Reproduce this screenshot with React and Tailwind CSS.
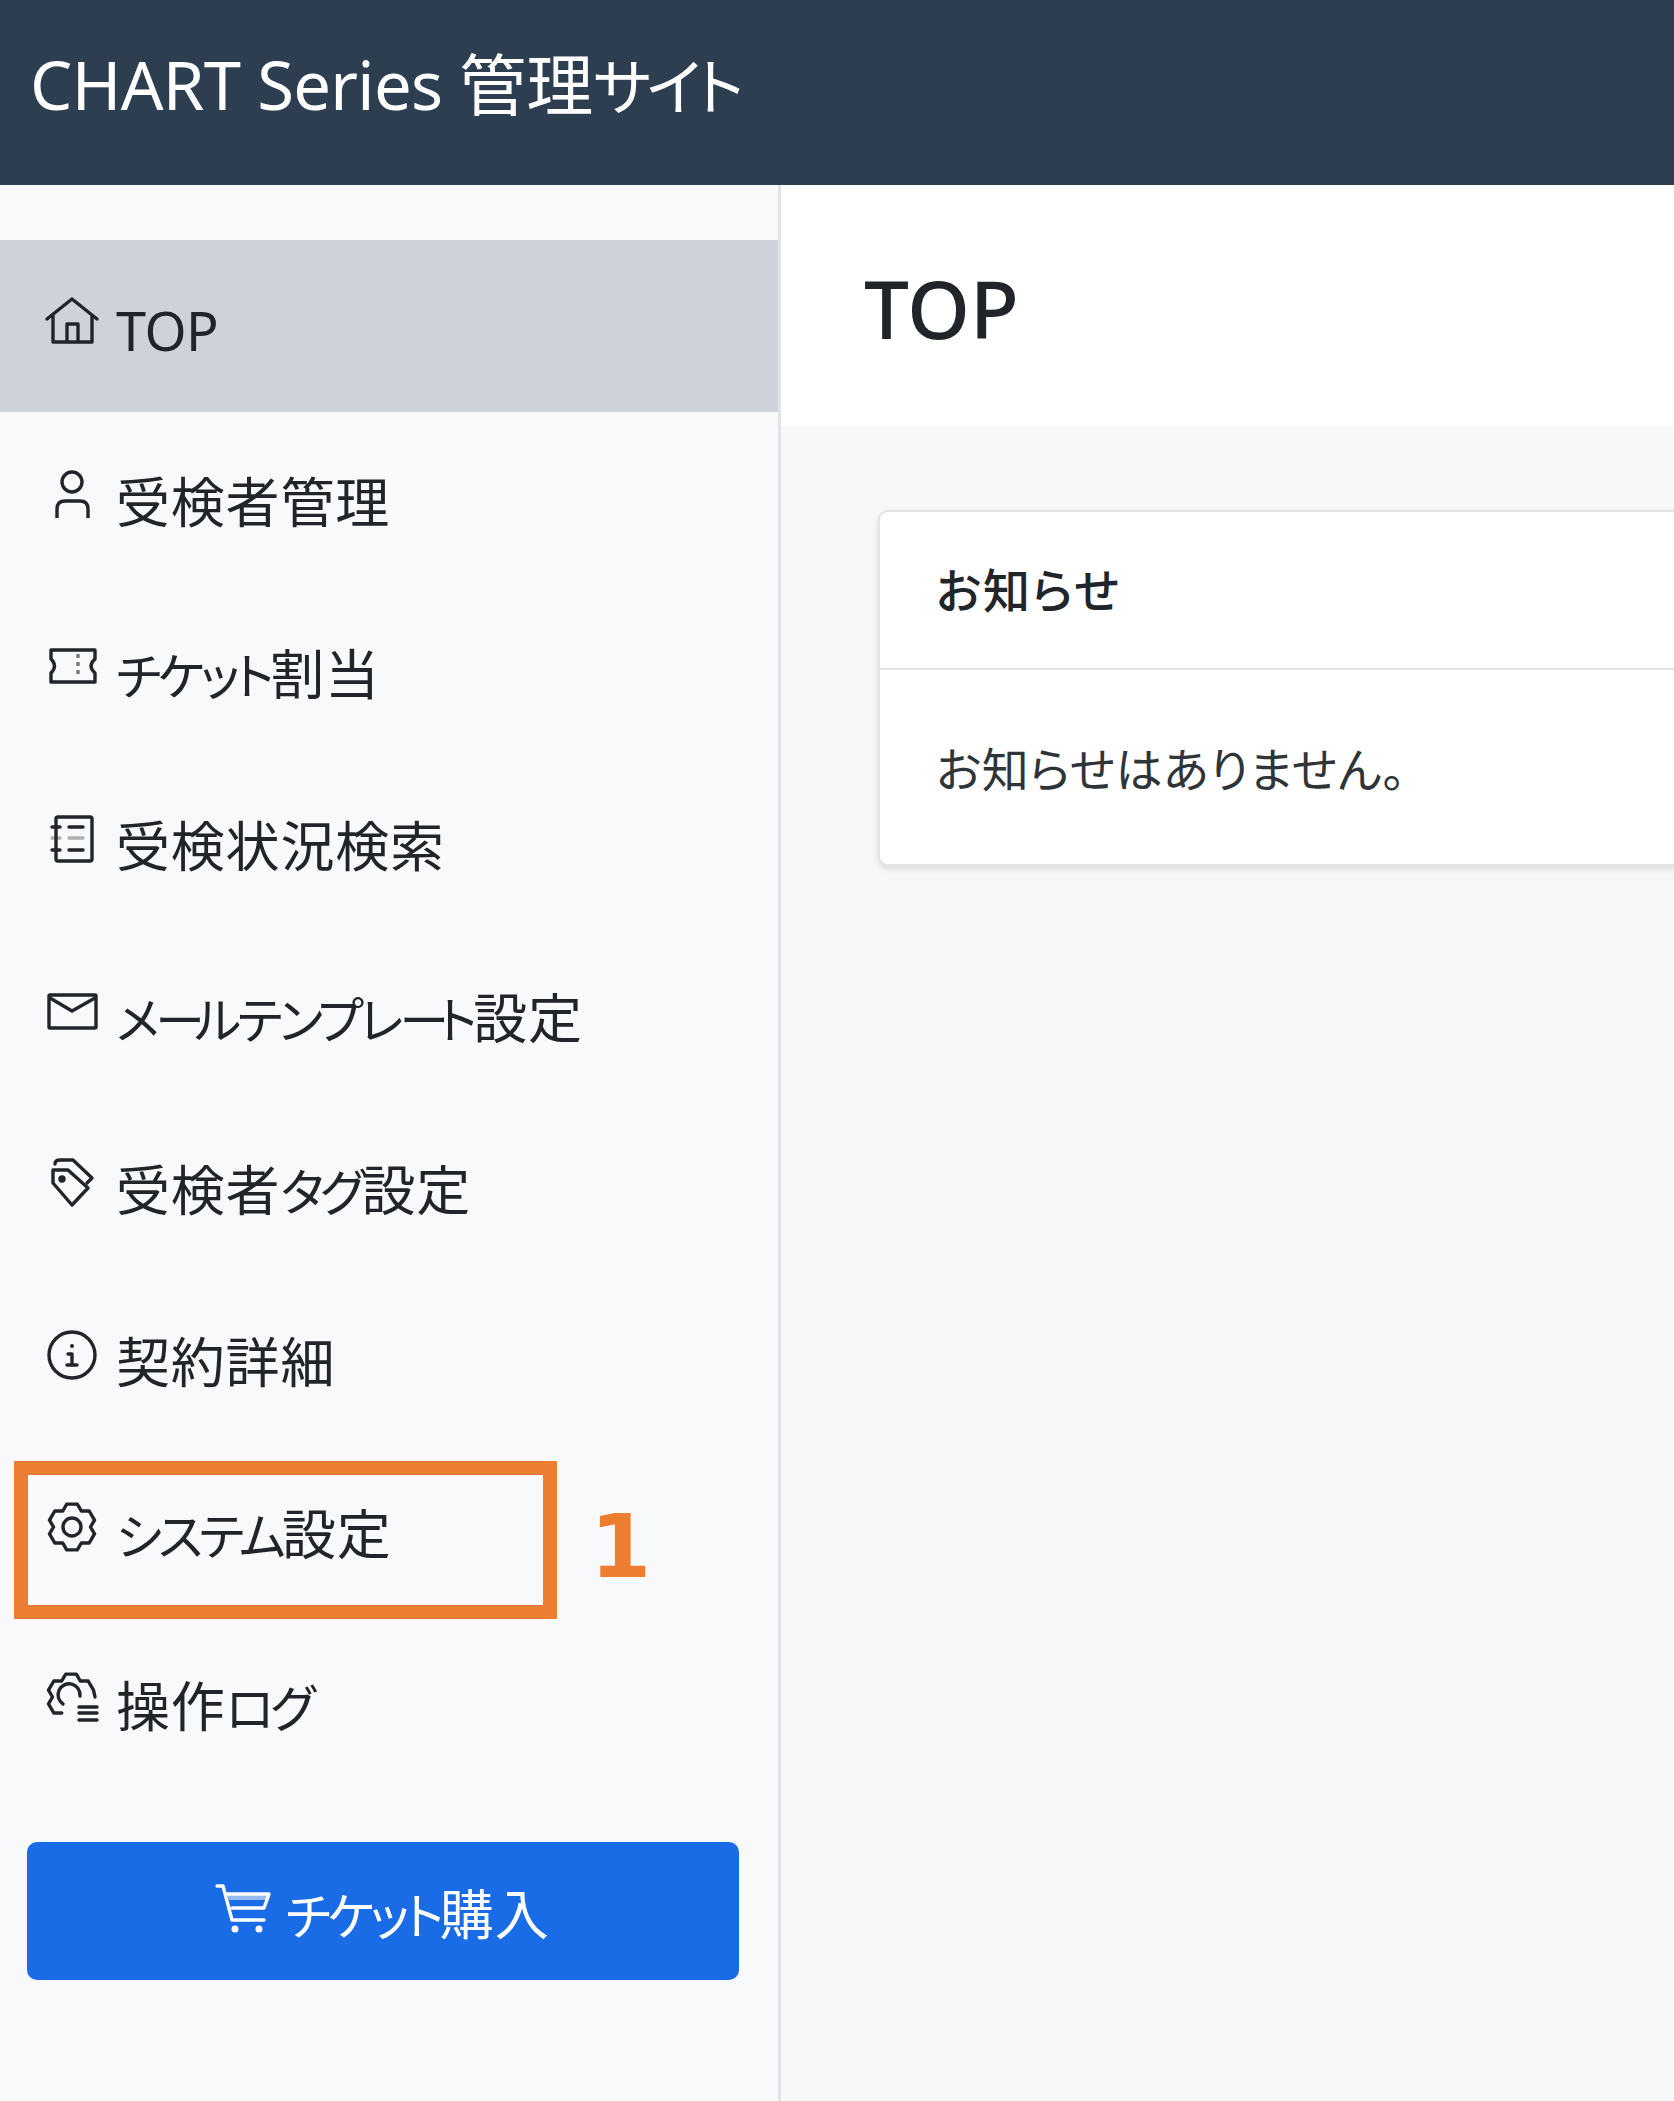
import React from "react";

// six lobed cog, drawn as a polyline around the centre
const gearPoints = (cx, cy, teeth) => {
  const pt = (r, deg) => {
    const a = (deg * Math.PI) / 180;
    return `${(cx + r * Math.cos(a)).toFixed(1)} ${(cy + r * Math.sin(a)).toFixed(1)}`;
  };
  const out = [];
  teeth.forEach((a) => {
    out.push(pt(18.5, a - 30), pt(23.5, a - 13), pt(23.5, a + 13));
  });
  return out;
};

const Icon = ({ children }) => (
  <svg
    viewBox="0 0 70 70"
    fill="none"
    stroke="currentColor"
    strokeWidth="3.4"
    strokeLinecap="round"
    strokeLinejoin="round"
    className="h-[70px] w-[70px] shrink-0"
  >
    {children}
  </svg>
);

const icons = {
  home: (
    <Icon>
      <path d="M7 29 32 9l25 20M13 25v27h39V25M27 52V34h11v18" />
    </Icon>
  ),
  person: (
    <Icon>
      <circle cx="32" cy="20" r="10" />
      <path d="M17 56v-9q0-8 8-8h15q8 0 8 8v9" strokeLinecap="butt" />
    </Icon>
  ),
  ticket: (
    <Icon>
      <path d="M11 16h44v9q-8 7 0 14v9H11v-9q7-7 0-14z" />
      <path d="M38 20v24" strokeDasharray="4 4" strokeLinecap="butt" opacity="0.6" />
    </Icon>
  ),
  journal: (
    <Icon>
      <rect x="16" y="11" width="36" height="44" rx="2" />
      <path d="M12 21h8M12 44h8M29 21h14M29 44h14" />
      <path d="M12 32h8M29 32h14" opacity="0.35" />
    </Icon>
  ),
  mail: (
    <Icon>
      <rect x="9" y="17" width="47" height="33" rx="1" />
      <path d="m10 20 22 13 23-13" />
    </Icon>
  ),
  tag: (
    <Icon>
      <path d="M15 14q0-4 5-4h13l19 18-5 5" />
      <path d="M13 33V20h15l20 18-16 17z" />
      <circle cx="22" cy="29" r="2" fill="currentColor" />
    </Icon>
  ),
  info: (
    <Icon>
      <circle cx="32" cy="33" r="23" />
      <circle cx="32" cy="24" r="2" fill="currentColor" stroke="none" />
      <path d="M28 32h4v11M27 43h10" />
    </Icon>
  ),
  gear: (
    <Icon>
      <polygon points={gearPoints(32, 33, [-90, -30, 30, 90, 150, 210]).join(" ")} />
      <circle cx="32" cy="33" r="9" />
    </Icon>
  ),
  log: (
    <Icon>
      <polyline points={gearPoints(31, 31, [150, 210, 270, 330]).join(" ") + " 55 31"} />
      <path d="M23 38a11 11 0 1 1 17-8" />
      <path d="M39 41h18M39 47h18M39 54h18" />
    </Icon>
  ),
};

const menu = [
  { key: "home", label: "TOP", active: true },
  { key: "person", label: "受検者管理" },
  { key: "ticket", label: "チケット割当" },
  { key: "journal", label: "受検状況検索" },
  { key: "mail", label: "メールテンプレート設定" },
  { key: "tag", label: "受検者タグ設定" },
  { key: "info", label: "契約詳細" },
  { key: "gear", label: "システム設定" },
  { key: "log", label: "操作ログ" },
];

// the reference's kana and latin run narrower than Noto's, so tighten those runs only
const Tight = ({ text }) =>
  text.split(/(ー|[ァ-ヶ]+|[A-Za-z ]+)/).map((part, i) => {
    if (!part) return null;
    if (part === "ー") return <span key={i} className="text-[0.92em] tracking-[-0.2em]">{part}</span>;
    if (/[ァ-ヶ]/.test(part)) return <span key={i} className="text-[0.92em] tracking-[-0.075em]">{part}</span>;
    if (/[A-Za-z]/.test(part)) return <span key={i} className="tracking-[-0.01em]">{part}</span>;
    return part;
  });

export default function App() {
  return (
    <div className="flex h-[2101px] w-full flex-col overflow-hidden bg-white font-['Noto_Sans','Noto_Sans_CJK_JP',sans-serif] text-[#212529] [font-feature-settings:'palt']">
      <header className="flex h-[185px] shrink-0 items-start whitespace-pre bg-[#2c3e50] pl-[30px] pt-[36px] text-[67px] leading-[96px] text-white">
        <span><Tight text="CHART Series 管理サイト" /></span>
      </header>

      <div className="flex min-h-0 flex-1">
        <aside className="relative w-[781px] shrink-0 border-r-[3px] border-[#e0e3e7] bg-[#f8f9fa] pt-[55px]">
          <ul>
            {menu.map((item) => (
              <li
                key={item.key}
                className={`flex h-[172px] items-start pl-[40px] pt-[50px] text-[54px] leading-[80px] tracking-[0.015em] ${
                  item.active ? "bg-[#ced3db]" : ""
                }`}
              >
                {icons[item.key]}
                <span className="ml-[6px] whitespace-nowrap">
                  <Tight text={item.label} />
                </span>
              </li>
            ))}
          </ul>

          <button
            type="button"
            className="ml-[27px] mt-[54px] flex h-[138px] w-[712px] items-center justify-center rounded-[10px] bg-[#1a6ce6] pr-[8px] text-[54px] tracking-[0.015em] text-white"
          >
            <svg
              viewBox="0 0 70 70"
              fill="none"
              stroke="currentColor"
              strokeWidth="3.4"
              strokeLinecap="round"
              strokeLinejoin="round"
              className="mb-[12px] h-[70px] w-[70px] shrink-0"
            >
              <path d="M8 16h6l9 34h32" />
              <path d="M18 24h42l-5 14H23" />
              <path d="M18 24h42l-2 6H20z" fill="currentColor" stroke="none" opacity="0.55" />
              <circle cx="26" cy="59" r="3.5" fill="currentColor" stroke="none" />
              <circle cx="50" cy="59" r="3.5" fill="currentColor" stroke="none" />
            </svg>
            <span className="ml-[7px] mt-[6px]">
              <Tight text="チケット購入" />
            </span>
          </button>

          {/* annotation over the screenshot */}
          <div className="absolute left-[14px] top-[1276px] h-[158px] w-[543px] border-[14px] border-[#ed7d31]" />
          <div className="absolute left-[590px] top-[1307px] font-['DejaVu_Sans',sans-serif] text-[88px] font-bold leading-[110px] text-[#ed7d31]">
            1
          </div>
        </aside>

        <main className="min-w-0 flex-1 overflow-hidden bg-[#f7f8fa]">
          <div className="flex h-[241px] items-center bg-white pl-[83px] text-[80px] font-medium leading-none">
            <h1 className="mt-[4px]">TOP</h1>
          </div>
          <div className="pl-[97px] pt-[84px]">
            <section className="w-[1100px] rounded-[10px] border-2 border-[#e3e4e6] bg-white shadow-[0_3px_6px_rgba(0,0,0,0.12)]">
              <div className="flex h-[158px] items-center border-b-2 border-[#e0e1e3] pl-[56px] text-[47px] font-medium tracking-[2px]">
                お知らせ
              </div>
              <div className="flex h-[194px] items-center pl-[56px] pt-[4px] text-[47px] tracking-[0.6px] text-[#2f3439]">
                お知らせはありません。
              </div>
            </section>
          </div>
        </main>
      </div>
    </div>
  );
}
